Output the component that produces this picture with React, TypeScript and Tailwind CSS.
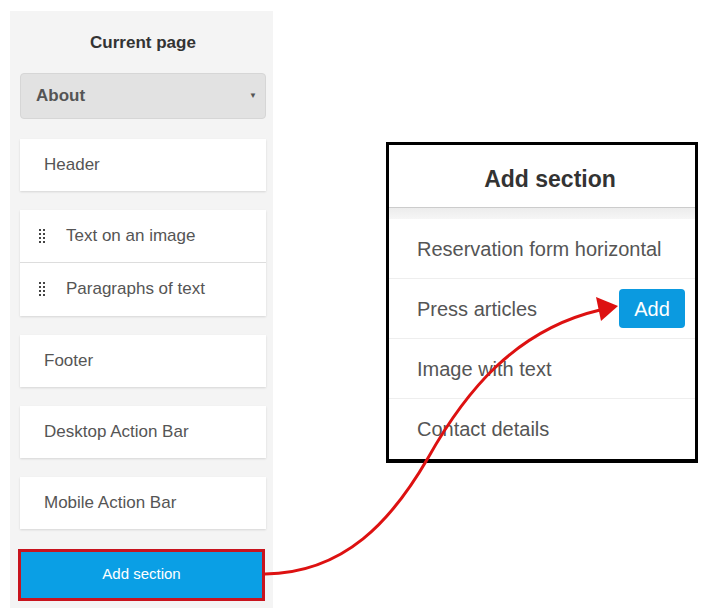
import React from "react";

const font = { fontFamily: '"Liberation Sans", Arial, sans-serif' };

function DragHandle() {
  return (
    <svg width="6" height="14" viewBox="0 0 6 14" className="shrink-0">
      {[0, 1, 2, 3].map((r) =>
        [0, 1].map((c) => (
          <rect key={`${r}-${c}`} x={c * 4} y={r * 4} width="2" height="2" fill="#444" />
        )),
      )}
    </svg>
  );
}

function Card({ label }: { label: string }) {
  return (
    <div className="flex h-[52px] items-center bg-white pl-6 text-[17px] text-[#555] shadow-[0_1px_2px_rgba(0,0,0,0.12)]">
      {label}
    </div>
  );
}

const options = ["Reservation form horizontal", "Press articles", "Image with text", "Contact details"];

export default function App() {
  return (
    <div className="relative h-[616px] w-[708px] overflow-hidden bg-white" style={font}>
      <div className="flex items-start">
        {/* left: current page */}
        <div className="ml-[10px] mt-[11px] flex h-[597px] w-[263px] flex-col bg-[#f4f4f4] pl-[10px] pr-[7px]">
          <div className="mt-[19px] text-center text-[17px] font-bold text-[#333]">Current page</div>
          <div className="mt-[17px] flex h-[46px] items-center justify-between rounded-[4px] border border-[#d6d6d6] bg-[#e2e2e2] pl-[15px] pr-[8px]">
            <span className="text-[17px] font-bold text-[#555]">About</span>
            <span className="text-[8px] text-[#555]">▼</span>
          </div>
          <div className="mt-[20px]">
            <Card label="Header" />
          </div>
          <div className="mt-[19px] bg-white shadow-[0_1px_2px_rgba(0,0,0,0.12)]">
            {["Text on an image", "Paragraphs of text"].map((t, i) => (
              <div
                key={t}
                className={`flex h-[53px] items-center gap-[21px] pl-[19px] text-[17px] text-[#555] ${i === 0 ? "border-b border-[#ddd]" : ""}`}
              >
                <DragHandle />
                {t}
              </div>
            ))}
          </div>
          <div className="mt-[19px]">
            <Card label="Footer" />
          </div>
          <div className="mt-[19px]">
            <Card label="Desktop Action Bar" />
          </div>
          <div className="mt-[19px]">
            <Card label="Mobile Action Bar" />
          </div>
          <button
            type="button"
            className="-ml-[2px] mt-[20px] flex h-[52px] w-[247px] items-center justify-center border-[3px] border-[#c8141e] bg-[#0a9fe5] text-[15px] text-white"
          >
            Add section
          </button>
        </div>

        {/* right: add section panel */}
        <div className="ml-[113px] mt-[142px] flex h-[321px] w-[312px] flex-col border-[3px] border-b-4 border-black bg-white">
          <div className="flex h-[63px] shrink-0 items-center justify-center border-b border-[#ccc] pl-[16px] pt-[6px] text-[23px] font-bold text-[#333]">
            Add section
          </div>
          <div className="h-[11px] shrink-0 bg-gradient-to-b from-[#ececec] to-[#f6f6f6]" />
          <div className="flex flex-col">
            {options.map((o, i) => (
              <div
                key={o}
                className={`flex h-[60px] items-center justify-between pl-[28px] pr-[10px] text-[20px] text-[#555] ${i < options.length - 1 ? "border-b border-[#eee]" : ""}`}
              >
                <span>{o}</span>
                {o === "Press articles" && (
                  <span className="flex h-[39px] w-[66px] items-center justify-center rounded-[4px] bg-[#0b9ae0] text-[20px] text-white">
                    Add
                  </span>
                )}
              </div>
            ))}
          </div>
        </div>
      </div>

      {/* red annotation arrow */}
      <svg className="pointer-events-none absolute left-0 top-0" width="708" height="616" viewBox="0 0 708 616">
        <path
          d="M265 574 C 345 573, 392 520, 428 458 C 465 392, 515 330, 600 310"
          fill="none"
          stroke="#dd1111"
          strokeWidth="3"
        />
        <polygon points="618,306 596,297 601,321" fill="#dd1111" />
      </svg>
    </div>
  );
}
